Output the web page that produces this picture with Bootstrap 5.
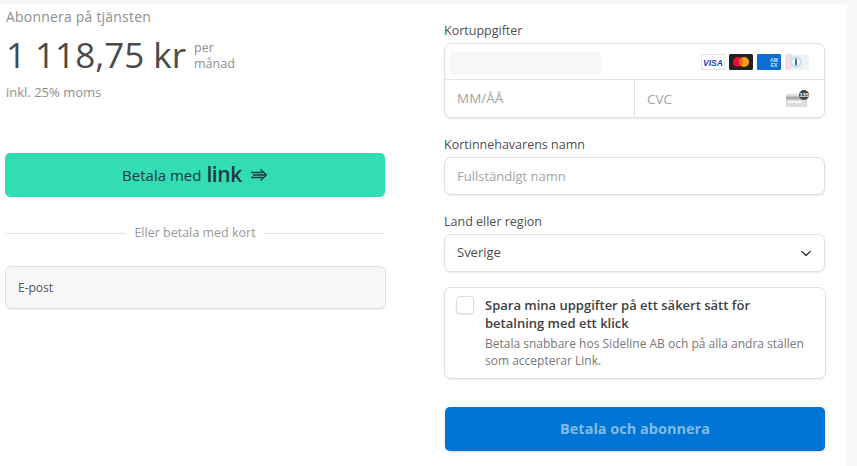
<!DOCTYPE html>
<html lang="sv">
<head>
    <meta charset="UTF-8">
    <meta name="viewport" content="width=device-width, initial-scale=1.0">
    <title>Abonnera</title>
    <link rel="stylesheet" href="https://cdn.jsdelivr.net/npm/bootstrap@5.3.0/dist/css/bootstrap.min.css">
    <style>
        html, body { height: 466px; overflow: hidden; }
        body { background: #f7f7f7; font-family: "Open Sans", "Noto Sans", sans-serif; color: #4a4a4a; font-size: 13px; padding: 4px 10px 0 0; }
        .sheet { background: #fff; height: 462px; padding: 0 21px 0 5px; gap: 59px; }
        .side-left { width: 380px; flex: none; }
        .side-right { width: 381px; flex: none; }
        .pay-title { font-size: 14px; line-height: 19px; color: #8e8e8e; margin: 3px 0 0 1px; letter-spacing: .2px; }
        .price-row { margin: 5px 0 0 1px; height: 48px; }
        .price-num { font-size: 35px; line-height: 48px; font-weight: 500; color: #4a4a4a; white-space: nowrap; }
        .price-per { font-size: 12.5px; line-height: 16px; color: #8e8e8e; margin-left: 8px; padding-top: 2px; }
        .tax-note { font-size: 13px; line-height: 18px; color: #8e8e8e; margin: 4px 0 0 1px; }
        .btn-link-pay { background: #33ddb3; border: 0; border-radius: 5px; height: 44px; width: 100%; margin-top: 52px; color: #1d3944; font-size: 15px; }
        .btn-link-pay:hover { background: #33ddb3; color: #1d3944; }
        .link-word { font-size: 21px; line-height: 20px; font-weight: 600; letter-spacing: -.4px; margin-left: 5px; position: relative; top: -1px; }
        .or-row { margin-top: 27px; height: 18px; color: #9a9a9a; font-size: 12.5px; gap: 8px; }
        .or-line { flex: 1; height: 1px; background: #e3e3e3; }
        .mail-box { background: #f7f7f7; border: 1px solid #e0e0e0; border-radius: 6px; height: 43px; margin-top: 24px; width: 381px; font-size: 12px; color: #555; padding-left: 12px; box-shadow: 0 1px 1px rgba(0,0,0,.06); }
        .field-label { font-size: 12.5px; line-height: 17px; color: #4f4f4f; margin: 0 0 4px; }
        .card-group-box, .form-control.field-box, .form-select.field-box, .save-box { border: 1px solid #e0e0e0; border-radius: 7px; box-shadow: 0 1px 2px rgba(0,0,0,.08); background-color: #fff; }
        .card-group-box { height: 75px; }
        .card-top { height: 36px; border-bottom: 1px solid #e3e3e3; padding: 8px 15px 0 5px; }
        .num-mask { width: 151px; height: 23px; background: #f7f7f7; }
        .brand-list { gap: 4px; margin-top: 2px; }
        .card-bottom { height: 37px; }
        .card-cell { width: 190px; border-right: 1px solid #e3e3e3; }
        .card-cell-b { flex: 1; padding-right: 15px; }
        .bare-input { border: 0; outline: 0; background: none; width: 100px; padding: 0 0 0 12px; font-size: 13.5px; color: #4a4a4a; height: 36px; }
        .bare-input::placeholder, .form-control.field-box::placeholder { color: #a3a3a3; opacity: 1; }
        .form-control.field-box { height: 38px; padding: 0 12px; font-size: 13px; }
        .form-select.field-box { height: 38px; padding: 0 12px; font-size: 13px; color: #4a4a4a; background-size: 14px 11px; background-position: right 11px center; }
        .gap-a { margin-top: 18px; }
        .gap-b { margin-top: 18px; }
        .save-box { margin-top: 15px; height: 92px; width: 382px; padding: 8px 11px; gap: 11px; }
        .form-check-input.save-check { width: 18px; height: 18px; margin: 0; flex: none; border-color: #dcdcdc; border-radius: 4px; box-shadow: 0 1px 2px rgba(0,0,0,.08); }
        .save-head { font-size: 13px; line-height: 18px; font-weight: 600; color: #3f3f3f; }
        .save-sub { font-size: 12px; line-height: 17px; color: #787878; margin-top: 3px; white-space: nowrap; }
        .btn-sub { background: #0074d4; border: 0; border-radius: 5px; height: 44px; width: 380px; margin: 28px 0 0 1px; color: #80bbeb; font-size: 14.5px; font-weight: 700; box-shadow: 0 1px 2px rgba(0,0,0,.15); }
        .btn-sub:hover { background: #0074d4; color: #80bbeb; }
    </style>
</head>
<body>
    <div class="sheet d-flex">
        <!-- Left side -->
        <div class="side-left">
            <div class="pay-title">Abonnera på tjänsten</div>
            <div class="price-row d-flex align-items-center">
                <span class="price-num">1 118,75 kr</span>
                <span class="price-per">per<br>månad</span>
            </div>
            <div class="tax-note">inkl. 25% moms</div>

            <button type="button" class="btn btn-link-pay d-flex align-items-center justify-content-center p-0">
                <span>Betala med</span><span class="link-word">link</span>
                <svg class="ms-2" width="18" height="14" viewBox="0 0 18 14" fill="none" stroke="#1d3944" stroke-width="1.3">
                    <path d="M1 4.5h12M3 7h12M1 9.5h12M10.5 1.5 16.5 7l-6 5.5"/>
                </svg>
            </button>

            <div class="or-row d-flex align-items-center">
                <div class="or-line"></div>
                <span>Eller betala med kort</span>
                <div class="or-line"></div>
            </div>

            <div class="mail-box d-flex align-items-center">E-post</div>
        </div>

        <!-- Right side -->
        <div class="side-right">
            <label class="field-label" style="margin-top:18px">Kortuppgifter</label>
            <div class="card-group-box">
                <div class="card-top d-flex justify-content-between">
                    <div class="num-mask"></div>
                    <div class="brand-list d-flex">
                        <svg width="24" height="16" viewBox="0 0 24 16"><rect x=".5" y=".5" width="23" height="15" fill="#fff" stroke="#e4e4e4"/><text x="12" y="11.5" font-family="Liberation Sans" font-size="8.5" font-weight="700" font-style="italic" fill="#1a3fb5" text-anchor="middle">VISA</text></svg>
                        <svg width="24" height="16" viewBox="0 0 24 16"><rect width="24" height="16" rx="1.5" fill="#222"/><circle cx="9" cy="8" r="5" fill="#e8112d"/><circle cx="15" cy="8" r="5" fill="#f79e1b"/><path d="M12 4a5 5 0 0 1 0 8 5 5 0 0 1 0-8z" fill="#f4601f"/></svg>
                        <svg width="24" height="16" viewBox="0 0 24 16"><rect width="24" height="16" rx="1" fill="#0a6fd0"/><text x="17" y="7.5" font-family="Liberation Sans" font-size="5" font-weight="700" fill="#cfe5fa" text-anchor="middle">AM</text><text x="17" y="13" font-family="Liberation Sans" font-size="5" font-weight="700" fill="#cfe5fa" text-anchor="middle">EX</text></svg>
                        <svg width="24" height="16" viewBox="0 0 24 16"><rect width="24" height="16" fill="#eef3f5"/><rect width="7" height="16" fill="#f6dcdc"/><circle cx="11" cy="8" r="6" fill="#cfe0ec"/><circle cx="11" cy="8" r="3.6" fill="#fff"/><rect x="10" y="4.5" width="2" height="7" fill="#3a78b5"/></svg>
                    </div>
                </div>
                <div class="card-bottom d-flex">
                    <div class="card-cell"><input class="bare-input" placeholder="MM/ÅÅ"></div>
                    <div class="card-cell-b d-flex justify-content-between align-items-center">
                        <input class="bare-input" placeholder="CVC">
                        <svg width="24" height="18" viewBox="0 0 24 18"><rect x="1" y="4" width="21" height="13" rx="1" fill="#dcdcdc"/><rect x="1" y="6.5" width="21" height="3" fill="#a9a9a9"/><rect x="3" y="11" width="14" height="2" fill="#f4f4f4"/><circle cx="19" cy="5" r="5" fill="#444"/><text x="19" y="7" font-family="Liberation Sans" font-size="5.5" font-weight="700" fill="#fff" text-anchor="middle">135</text></svg>
                    </div>
                </div>
            </div>

            <label class="field-label gap-a d-block">Kortinnehavarens namn</label>
            <input class="form-control field-box" placeholder="Fullständigt namn">

            <label class="field-label gap-b d-block">Land eller region</label>
            <select class="form-select field-box"><option>Sverige</option></select>

            <div class="save-box d-flex">
                <input class="form-check-input save-check" type="checkbox">
                <div>
                    <div class="save-head">Spara mina uppgifter på ett säkert sätt för<br>betalning med ett klick</div>
                    <div class="save-sub">Betala snabbare hos Sideline AB och på alla andra ställen<br>som accepterar Link.</div>
                </div>
            </div>

            <button type="button" class="btn btn-sub d-block p-0">Betala och abonnera</button>
        </div>
    </div>
    <script src="https://cdn.jsdelivr.net/npm/bootstrap@5.3.0/dist/js/bootstrap.bundle.min.js"></script>
</body>
</html>
